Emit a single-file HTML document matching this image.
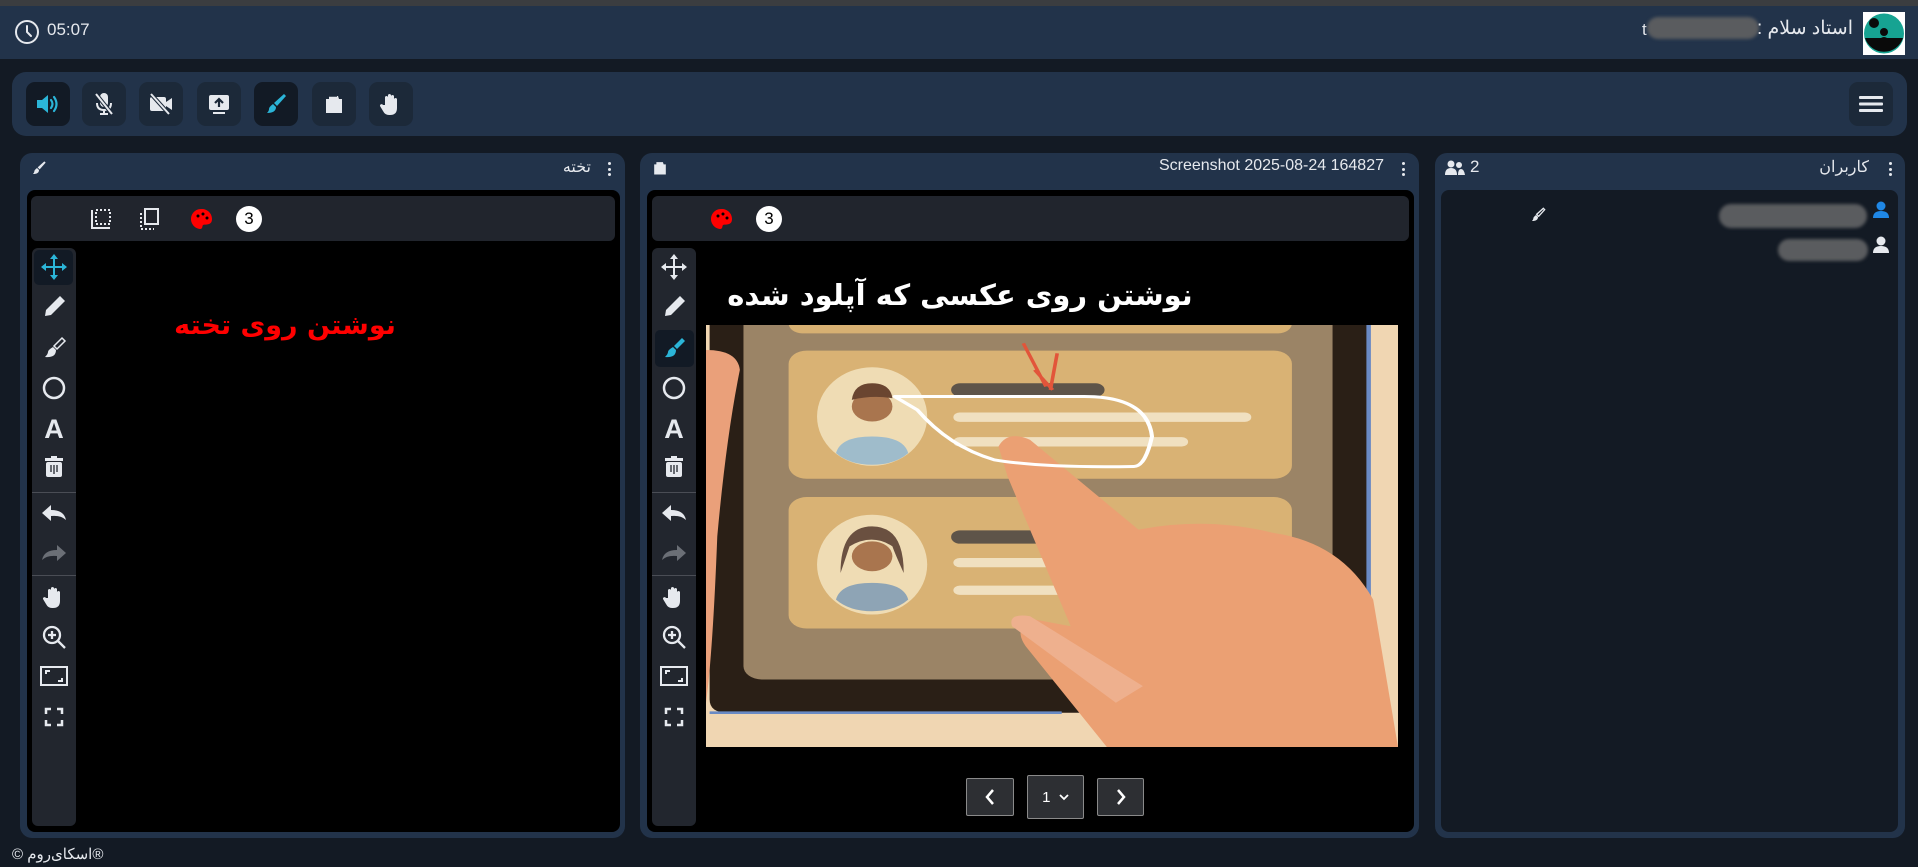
<!DOCTYPE html>
<html><head><meta charset="utf-8">
<style>
*{box-sizing:border-box;margin:0;padding:0}
body{width:1918px;height:867px;background:#131a24;position:relative;overflow:hidden;font-family:"Liberation Sans","Noto Sans CJK SC",sans-serif;color:#e6e9ee}
.abs{position:absolute}
.hdr{left:0;top:6px;width:1918px;height:53px;background:#22334a}
.strip{left:0;top:0;width:1918px;height:6px;background:#3b3d40}
.tb{left:12px;top:72px;width:1895px;height:64px;background:#22334a;border-radius:14px}
.btn{top:82px;width:44px;height:44px;border-radius:9px;background:#1c2939;display:flex;align-items:center;justify-content:center}
.btn.on{background:#121a25}
.panel{top:153px;height:685px;background:#22334a;border-radius:12px}
.inner{background:#000;border-radius:8px}
.bar{background:#21252d;border-radius:6px}
.col{background:#22262e;border-radius:6px}
.num{width:26px;height:26px;border-radius:50%;background:#fff;color:#000;font-size:17px;display:flex;align-items:center;justify-content:center}
.pg{top:778px;height:38px;background:#2d2f33;border:1px solid #8a8a8a;border-radius:2px;display:flex;align-items:center;justify-content:center;color:#fff}
.blur{background:#5a5c5f;border-radius:12px;filter:blur(1.5px)}
.kebab{width:4px;height:14px;display:flex;flex-direction:column;justify-content:space-between;align-items:center}
.kebab i{display:block;width:3px;height:3px;background:#e6e9ee;border-radius:50%}
div{white-space:nowrap}
</style></head><body>
<div class="abs strip"></div>
<div class="abs hdr"></div>
<svg class="abs" style="left:14px;top:19px" width="26" height="26" viewBox="0 0 26 26"><circle cx="13" cy="13" r="11" fill="none" stroke="#e6e9ee" stroke-width="2"/><path d="M13 7v6l4 4" fill="none" stroke="#e6e9ee" stroke-width="2" stroke-linecap="round"/></svg>
<div class="abs" style="left:47px;top:20px;font-size:17px;color:#e6e9ee">05:07</div>
<div class="abs" style="left:1642px;top:20px;font-size:17px">t</div>
<div class="abs blur" style="left:1647px;top:17px;width:112px;height:22px"></div>
<div class="abs" dir="rtl" style="right:65px;top:17px;font-size:19px">استاد سلام :</div>
<svg class="abs" style="left:1863px;top:12px" width="42" height="43" viewBox="0 0 42 43"><rect width="42" height="43" fill="#fff"/><circle cx="21" cy="21.5" r="20" fill="#16a392"/><path d="M2 26h38a20 20 0 0 1-38 0z" fill="#0a0a0a"/><circle cx="21" cy="20" r="4" fill="#0a0a0a"/><path d="M14 30q7-10 14 0z" fill="#0a0a0a"/><circle cx="11" cy="11" r="5" fill="#0a0a0a"/></svg>

<div class="abs tb"></div>
<div class="abs btn on" style="left:26px"><svg width="26" height="24" viewBox="0 0 26 24"><path d="M2 8h5l6-5v18l-6-5H2z" fill="#2bb5d8"/><path d="M16 8q3 4 0 8M19 5q5 7 0 14" fill="none" stroke="#2bb5d8" stroke-width="2.2" stroke-linecap="round"/></svg></div>
<div class="abs btn" style="left:82px"><svg width="22" height="26" viewBox="0 0 22 26"><rect x="7" y="2" width="8" height="14" rx="4" fill="#e6e9ee"/><path d="M4 12q0 7 7 7t7-7M11 19v4M7 23h8" fill="none" stroke="#e6e9ee" stroke-width="2"/><path d="M3 3l16 20" stroke="#1c2939" stroke-width="4"/><path d="M3 3l16 20" stroke="#e6e9ee" stroke-width="2"/></svg></div>
<div class="abs btn" style="left:139px"><svg width="26" height="22" viewBox="0 0 26 22"><rect x="2" y="4" width="16" height="14" rx="2" fill="#e6e9ee"/><path d="M18 9l6-4v12l-6-4z" fill="#e6e9ee"/><path d="M3 1l18 20" stroke="#1c2939" stroke-width="4"/><path d="M3 1l18 20" stroke="#e6e9ee" stroke-width="2"/></svg></div>
<div class="abs btn" style="left:197px"><svg width="24" height="24" viewBox="0 0 24 24"><rect x="2" y="3" width="20" height="15" rx="2" fill="#e6e9ee"/><path d="M12 15V7M8 11l4-4 4 4" fill="none" stroke="#1c2939" stroke-width="2.2"/><rect x="6" y="20" width="12" height="2" fill="#e6e9ee"/></svg></div>
<div class="abs btn on" style="left:254px"><svg width="24" height="24" viewBox="0 0 24 24"><path d="M20 2l2 2-9 10-3-3z" fill="#2bb5d8"/><path d="M9 12l3 3q0 6-9 6 2-2 2-4t4-5z" fill="#2bb5d8"/></svg></div>
<div class="abs btn" style="left:312px"><svg width="22" height="22" viewBox="0 0 22 22"><path d="M3 6h3V3h9l1 3h3v14H3z" fill="#e6e9ee"/><path d="M6 3h8" stroke="#1c2939" stroke-width="1.5"/></svg></div>
<div class="abs btn" style="left:369px"><svg width="24" height="26" viewBox="0 0 24 26"><path d="M6 14V6a1.6 1.6 0 0 1 3 0v6V4a1.6 1.6 0 0 1 3 0v8V5a1.6 1.6 0 0 1 3 0v8V8a1.6 1.6 0 0 1 3 0v9q0 7-7 7h-1q-4 0-6-4l-3-5a1.6 1.6 0 0 1 3-1z" fill="#e6e9ee"/></svg></div>
<div class="abs btn" style="left:1849px"><svg width="24" height="20" viewBox="0 0 24 20"><rect y="2" width="24" height="3" rx="1" fill="#e6e9ee"/><rect y="8.5" width="24" height="3" rx="1" fill="#e6e9ee"/><rect y="15" width="24" height="3" rx="1" fill="#e6e9ee"/></svg></div>

<div class="abs panel" style="left:20px;width:605px"></div>
<svg class="abs" style="left:31px;top:160px" width="16" height="16" viewBox="0 0 24 24"><path d="M20 2l2 2-9 10-3-3z" fill="#e6e9ee"/><path d="M9 12l3 3q0 6-9 6 2-2 2-4t4-5z" fill="#e6e9ee"/></svg>
<div class="abs" dir="rtl" style="right:1327px;top:157px;font-size:16px">تخته</div>
<div class="abs kebab" style="left:607px;top:162px"><i></i><i></i><i></i></div>
<div class="abs inner" style="left:27px;top:190px;width:593px;height:642px"></div>
<div class="abs bar" style="left:31px;top:196px;width:584px;height:45px"></div>
<svg class="abs" style="left:89px;top:207px" width="24" height="24" viewBox="0 0 24 24"><path d="M3 3v18h18" fill="none" stroke="#e6e9ee" stroke-width="2"/><rect x="7" y="3" width="14" height="14" fill="none" stroke="#e6e9ee" stroke-width="2" stroke-dasharray="2 2"/></svg>
<svg class="abs" style="left:137px;top:207px" width="24" height="24" viewBox="0 0 24 24"><rect x="8" y="2" width="13" height="15" fill="none" stroke="#e6e9ee" stroke-width="2"/><path d="M4 6v16h13" fill="none" stroke="#e6e9ee" stroke-width="2" stroke-dasharray="2 2"/></svg>
<svg class="abs" style="left:190px;top:207px" width="24" height="24" viewBox="0 0 24 24"><path d="M12 2a10 10 0 0 0-2 20c3 0 2-3 3-4 2-1 9 1 9-6 0-6-5-10-10-10z" fill="#f00"/><circle cx="8" cy="9" r="1.5"/><circle cx="13" cy="7" r="1.5"/><circle cx="17" cy="11" r="1.5"/></svg>
<div class="abs num" style="left:236px;top:206px">3</div>
<div class="abs col" style="left:32px;top:248px;width:44px;height:578px"></div>
<div class="abs" style="left:34px;top:250px;width:39px;height:35px;background:#121a25;border-radius:5px"></div>
<div class="abs" style="left:32px;top:492px;width:44px;height:1px;background:#4a4d55"></div>
<div class="abs" style="left:32px;top:575px;width:44px;height:1px;background:#4a4d55"></div>
<div class="abs" dir="rtl" style="left:150px;top:310px;width:270px;text-align:center;font-size:27px;font-weight:bold;color:#f00;font-family:'DejaVu Sans',sans-serif">نوشتن روی تخته</div>

<div class="abs panel" style="left:640px;width:779px"></div>
<svg class="abs" style="left:652px;top:160px" width="16" height="16" viewBox="0 0 22 22"><path d="M3 6h3V3h9l1 3h3v14H3z" fill="#e6e9ee"/></svg>
<div class="abs" style="right:534px;top:157px;font-size:16px">Screenshot 2025-08-24 164827</div>
<div class="abs kebab" style="left:1401px;top:162px"><i></i><i></i><i></i></div>
<div class="abs inner" style="left:647px;top:190px;width:767px;height:642px"></div>
<div class="abs bar" style="left:652px;top:196px;width:757px;height:45px"></div>
<svg class="abs" style="left:710px;top:207px" width="24" height="24" viewBox="0 0 24 24"><path d="M12 2a10 10 0 0 0-2 20c3 0 2-3 3-4 2-1 9 1 9-6 0-6-5-10-10-10z" fill="#f00"/><circle cx="8" cy="9" r="1.5"/><circle cx="13" cy="7" r="1.5"/><circle cx="17" cy="11" r="1.5"/></svg>
<div class="abs num" style="left:756px;top:206px">3</div>
<div class="abs col" style="left:652px;top:248px;width:44px;height:578px"></div>
<div class="abs" style="left:655px;top:330px;width:39px;height:37px;background:#121a25;border-radius:5px"></div>
<div class="abs" style="left:652px;top:492px;width:44px;height:1px;background:#4a4d55"></div>
<div class="abs" style="left:652px;top:575px;width:44px;height:1px;background:#4a4d55"></div>
<div class="abs" dir="rtl" style="left:700px;top:278px;width:520px;text-align:center;font-size:29px;font-weight:bold;color:#fff;font-family:'DejaVu Sans',sans-serif">نوشتن روی عکسی که آپلود شده</div>
<svg class="abs" style="left:706px;top:325px" width="692" height="422" viewBox="12 15 1533 1268" preserveAspectRatio="none">
<rect x="12" y="15" width="1533" height="1268" fill="#f0d6b2"/>
<path d="M20 15H1480V1180H60Q20 1180 20 1140z" fill="#2a1f16"/>
<path d="M20 1180H800" stroke="#6a8ac4" stroke-width="8"/>
<path d="M1480 15V1180" stroke="#6a8ac4" stroke-width="10"/>
<rect x="95" y="-40" width="1305" height="1120" rx="40" fill="#9b8466"/>
<rect x="195" y="-20" width="1115" height="60" rx="30" fill="#d7b072"/>
<rect x="195" y="92" width="1115" height="385" rx="40" fill="#d9b274"/>
<rect x="195" y="532" width="1115" height="395" rx="40" fill="#d9b274"/>
<ellipse cx="380" cy="290" rx="122" ry="148" fill="#efdcb4"/>
<ellipse cx="380" cy="735" rx="122" ry="150" fill="#efdcb4"/>
<circle cx="380" cy="260" r="45" fill="#a9754e"/><path d="M335 240q5-50 45-50t45 45q-45-10-90 5z" fill="#6a4530"/>
<path d="M300 400q10-50 80-50t80 50q-30 35-80 35t-80-35z" fill="#9fbccb"/>
<circle cx="380" cy="710" r="45" fill="#a9754e"/><path d="M310 760q0-140 70-140t70 140q-20-60-25-80-45-40-95 0z" fill="#6a5040"/>
<path d="M300 840q10-50 80-50t80 50q-30 35-80 35t-80-35z" fill="#8ea4b5"/>
<rect x="555" y="190" width="340" height="40" rx="20" fill="#5e5449"/>
<rect x="560" y="278" width="660" height="28" rx="14" fill="#f0e0c0"/>
<rect x="560" y="352" width="520" height="28" rx="14" fill="#f0e0c0"/>
<rect x="555" y="632" width="260" height="40" rx="20" fill="#5e5449"/>
<rect x="560" y="715" width="320" height="28" rx="14" fill="#f0e0c0"/>
<rect x="560" y="798" width="320" height="28" rx="14" fill="#f0e0c0"/>
<path d="M12 90q70 0 75 60-30 200-50 500-10 350-25 500z" fill="#eaa07a"/>
<path d="M660 380q20-50 70-20l240 270q150-40 300 10 150 30 220 200l55 443H900L720 980q-30-60 20-80l80 20-140-450z" fill="#eba073"/>
<path d="M690 920q-10-40 40-30l250 210-60 50z" fill="#eeb08e"/>
<path d="M430 230H520q200 0 330 0 140 0 150 120-15 90-40 90-200 5-310-20-100-40-170-150z" fill="none" stroke="#fff" stroke-width="9" stroke-linejoin="round"/>
<path d="M715 70l50 130M790 100l-15 110M740 150l40 60" stroke="#e2553a" stroke-width="8"/>
</svg>
<div class="abs pg" style="left:966px;width:48px"><svg width="12" height="18" viewBox="0 0 12 18"><path d="M9 2L3 9l6 7" fill="none" stroke="#fff" stroke-width="2.5"/></svg></div>
<div class="abs pg" style="left:1027px;width:57px;top:775px;height:44px;font-size:15px">1&nbsp;&nbsp;<svg width="10" height="8" viewBox="0 0 10 8"><path d="M1 2l4 4 4-4" fill="none" stroke="#fff" stroke-width="1.8"/></svg></div>
<div class="abs pg" style="left:1097px;width:47px"><svg width="12" height="18" viewBox="0 0 12 18"><path d="M3 2l6 7-6 7" fill="none" stroke="#fff" stroke-width="2.5"/></svg></div>

<svg class="abs" style="left:0;top:0" width="700" height="867">
<g fill="#e6e9ee" stroke="none">
<g transform="translate(54 267)" fill="#2bb5d8"><path d="M-1-10h2v20h-2zM-10-1h20v2h-20z"/><path d="M0-13l-4 5h8zM0 13l-4-5h8zM-13 0l5-4v8zM13 0l-5-4v8z"/></g>
<g transform="translate(674 267)"><path d="M-1-10h2v20h-2zM-10-1h20v2h-20z"/><path d="M0-13l-4 5h8zM0 13l-4-5h8zM-13 0l5-4v8zM13 0l-5-4v8z"/></g>
<g transform="translate(54 308)"><path d="M6-12l5 5-14 14-6 1 1-6z"/></g>
<g transform="translate(674 308)"><path d="M6-12l5 5-14 14-6 1 1-6z"/></g>
<g transform="translate(54 349)"><path d="M8-11l3 3-8 8-3-3z" fill="none" stroke="#e6e9ee" stroke-width="1.5"/><path d="M-1-2l3 3q0 8-11 7 3-3 3-5t5-5z"/></g>
<g transform="translate(674 349)" fill="#2bb5d8"><path d="M8-11l3 3-8 8-3-3z"/><path d="M-1-2l3 3q0 8-11 7 3-3 3-5t5-5z"/></g>
<circle cx="54" cy="388" r="10" fill="none" stroke="#e6e9ee" stroke-width="2.5"/>
<circle cx="674" cy="388" r="10" fill="none" stroke="#e6e9ee" stroke-width="2.5"/>
<text x="54" y="438" text-anchor="middle" font-size="27" font-weight="bold" font-family="Liberation Sans">A</text>
<text x="674" y="438" text-anchor="middle" font-size="27" font-weight="bold" font-family="Liberation Sans">A</text>
<g transform="translate(54 468)"><rect x="-8" y="-6" width="16" height="15" rx="2"/><rect x="-9" y="-10" width="18" height="3"/><rect x="-3" y="-12" width="6" height="3"/><path d="M-3-3v7M0-3v9M3-3v7" stroke="#22262e" stroke-width="1.3"/></g>
<g transform="translate(674 468)"><rect x="-8" y="-6" width="16" height="15" rx="2"/><rect x="-9" y="-10" width="18" height="3"/><rect x="-3" y="-12" width="6" height="3"/><path d="M-3-3v7M0-3v9M3-3v7" stroke="#22262e" stroke-width="1.3"/></g>
<g transform="translate(54 513)"><path d="M-12 0l9-8v5q13 0 15 10-5-5-15-4v5z"/></g>
<g transform="translate(674 513)"><path d="M-12 0l9-8v5q13 0 15 10-5-5-15-4v5z"/></g>
<g transform="translate(54 553)" fill="#6b6f76"><path d="M12 0l-9-8v5q-13 0-15 10 5-5 15-4v5z"/></g>
<g transform="translate(674 553)" fill="#6b6f76"><path d="M12 0l-9-8v5q-13 0-15 10 5-5 15-4v5z"/></g>
<g transform="translate(42 584)"><path d="M6 14V6a1.6 1.6 0 0 1 3 0v6V4a1.6 1.6 0 0 1 3 0v8V5a1.6 1.6 0 0 1 3 0v8V8a1.6 1.6 0 0 1 3 0v9q0 7-7 7h-1q-4 0-6-4l-3-5a1.6 1.6 0 0 1 3-1z"/></g>
<g transform="translate(662 584)"><path d="M6 14V6a1.6 1.6 0 0 1 3 0v6V4a1.6 1.6 0 0 1 3 0v8V5a1.6 1.6 0 0 1 3 0v8V8a1.6 1.6 0 0 1 3 0v9q0 7-7 7h-1q-4 0-6-4l-3-5a1.6 1.6 0 0 1 3-1z"/></g>
<g transform="translate(54 637)" fill="none" stroke="#e6e9ee" stroke-width="2.3"><circle cx="-2" cy="-2" r="8"/><path d="M4 4l7 7M-2-6v8M-6-2h8"/></g>
<g transform="translate(674 637)" fill="none" stroke="#e6e9ee" stroke-width="2.3"><circle cx="-2" cy="-2" r="8"/><path d="M4 4l7 7M-2-6v8M-6-2h8"/></g>
<g transform="translate(54 676)" fill="none" stroke="#e6e9ee" stroke-width="2"><rect x="-13" y="-9" width="26" height="18"/><path d="M-8-2v-3h4M8 2v3h-4"/></g>
<g transform="translate(674 676)" fill="none" stroke="#e6e9ee" stroke-width="2"><rect x="-13" y="-9" width="26" height="18"/><path d="M-8-2v-3h4M8 2v3h-4"/></g>
<g transform="translate(54 717)" fill="none" stroke="#e6e9ee" stroke-width="2.5"><path d="M-8-3v-5h5M3-8h5v5M8 3v5h-5M-3 8h-5v-5"/></g>
<g transform="translate(674 717)" fill="none" stroke="#e6e9ee" stroke-width="2.5"><path d="M-8-3v-5h5M3-8h5v5M8 3v5h-5M-3 8h-5v-5"/></g>
</g>
</svg>

<div class="abs panel" style="left:1435px;width:470px"></div>
<svg class="abs" style="left:1445px;top:160px" width="20" height="16" viewBox="0 0 20 16"><circle cx="6" cy="4" r="3.5" fill="#e6e9ee"/><path d="M0 15q0-7 6-7t6 7z" fill="#e6e9ee"/><circle cx="14" cy="5" r="3" fill="#e6e9ee"/><path d="M13 15q0-6 3-6t4 6z" fill="#e6e9ee"/></svg>
<div class="abs" style="left:1470px;top:157px;font-size:17px">2</div>
<div class="abs" dir="rtl" style="right:49px;top:157px;font-size:16px">کاربران</div>
<div class="abs kebab" style="left:1888px;top:162px"><i></i><i></i><i></i></div>
<div class="abs" style="left:1441px;top:190px;width:457px;height:642px;background:#131a24;border-radius:8px"></div>
<svg class="abs" style="left:1872px;top:201px" width="18" height="18" viewBox="0 0 18 18"><circle cx="9" cy="5" r="4.5" fill="#1f87e5"/><path d="M1 17q0-7 8-7t8 7z" fill="#1f87e5"/></svg>
<svg class="abs" style="left:1872px;top:236px" width="18" height="18" viewBox="0 0 18 18"><circle cx="9" cy="5" r="4.5" fill="#e6e9ee"/><path d="M1 17q0-7 8-7t8 7z" fill="#e6e9ee"/></svg>
<div class="abs blur" style="left:1719px;top:204px;width:148px;height:24px"></div>
<div class="abs blur" style="left:1778px;top:239px;width:90px;height:22px"></div>
<svg class="abs" style="left:1530px;top:207px" width="16" height="16" viewBox="0 0 24 24"><path d="M20 2l2 2-9 10-3-3z" fill="none" stroke="#e6e9ee" stroke-width="2"/><path d="M9 12l3 3q0 6-9 6 2-2 2-4t4-5z" fill="#e6e9ee"/></svg>

<div class="abs" style="left:12px;top:845px;font-size:15px"><span style="display:inline-block">©</span> <span style="display:inline-block" dir="rtl">اسکای‌روم</span><span style="display:inline-block">®</span></div>
</body></html>
